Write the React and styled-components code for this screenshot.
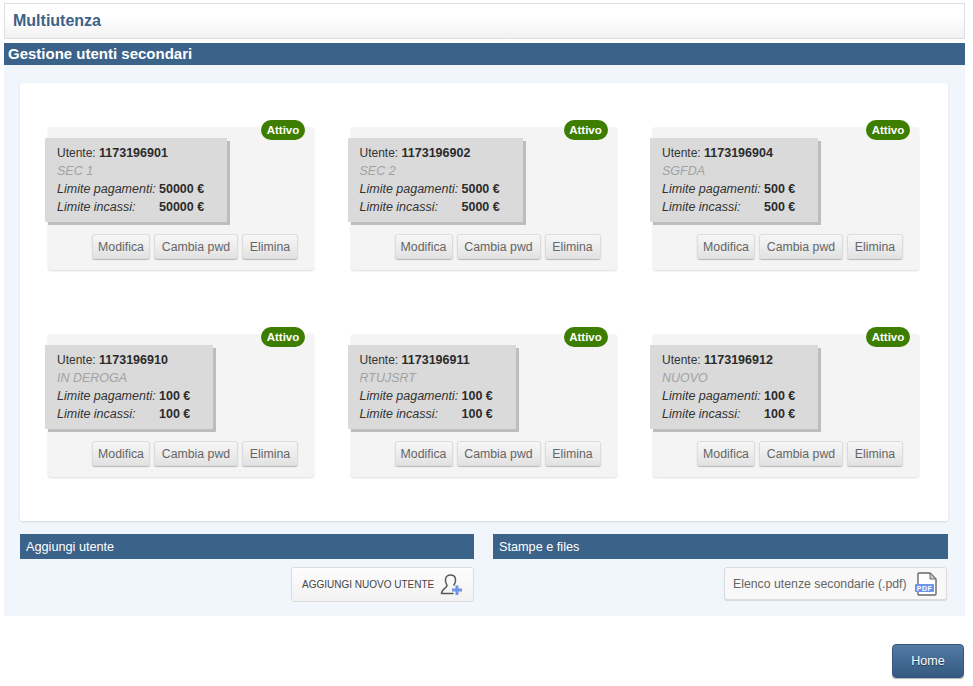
import React from 'react';
import styled, { createGlobalStyle } from 'styled-components';

const users = [
  { id: '1173196901', name: 'SEC 1', pay: '50000 €', inc: '50000 €' },
  { id: '1173196902', name: 'SEC 2', pay: '5000 €', inc: '5000 €' },
  { id: '1173196904', name: 'SGFDA', pay: '500 €', inc: '500 €' },
  { id: '1173196910', name: 'IN DEROGA', pay: '100 €', inc: '100 €' },
  { id: '1173196911', name: 'RTUJSRT', pay: '100 €', inc: '100 €' },
  { id: '1173196912', name: 'NUOVO', pay: '100 €', inc: '100 €' },
];

function AddUserIcon() {
  return (
    <svg width="24" height="22" viewBox="0 0 24 22">
      <path
        d="M7 11.5 C4.5 8 4.5 1 10.5 1 C16.5 1 16.5 7 14 11 M7 11.5 C7 14 1.5 14.5 1.5 19.5 H13"
        fill="none"
        stroke="#5a5a5a"
        strokeWidth="1.5"
        strokeLinecap="round"
      />
      <path d="M15.5 11.5 h3 v3 h3.5 v3 h-3.5 v3.5 h-3 v-3.5 h-3.5 v-3 h3.5 z" fill="#6f94e8" />
    </svg>
  );
}

function PdfIcon() {
  return (
    <svg width="22" height="24" viewBox="0 0 22 24">
      <path
        d="M3 12 V2 a1 1 0 0 1 1 -1 H15 L21 7 V22 a1 1 0 0 1 -1 1 H4 a1 1 0 0 1 -1 -1 V20"
        fill="#fff"
        stroke="#6a6a6a"
        strokeWidth="1.4"
      />
      <path d="M15 1 V7 H21 Z" fill="#c4c4c4" stroke="#6a6a6a" strokeWidth="1" />
      <rect x="0" y="12" width="19" height="8" rx="1" fill="#6f94e8" />
      <text x="9.5" y="18.7" fontFamily="Liberation Sans, sans-serif" fontSize="7" fontWeight="700" letterSpacing="0.5" fill="#fff" textAnchor="middle">
        PDF
      </text>
    </svg>
  );
}

function UserCard({ user }) {
  return (
    <Card>
      <StatusBadge>Attivo</StatusBadge>
      <InfoBox>
        <InfoLine>
          Utente: <strong>{user.id}</strong>
        </InfoLine>
        <UserName>{user.name}</UserName>
        <LimitRow>
          <LimitLabel>Limite pagamenti:</LimitLabel>
          <strong>{user.pay}</strong>
        </LimitRow>
        <LimitRow>
          <LimitLabel>Limite incassi:</LimitLabel>
          <strong>{user.inc}</strong>
        </LimitRow>
      </InfoBox>
      <CardActions>
        <SmallButton $width={58}>Modifica</SmallButton>
        <SmallButton $width={84}>Cambia pwd</SmallButton>
        <SmallButton $width={56}>Elimina</SmallButton>
      </CardActions>
    </Card>
  );
}

export default function App() {
  return (
    <Page>
      <GlobalStyle />
      <TitleBar>Multiutenza</TitleBar>
      <SectionBar>Gestione utenti secondari</SectionBar>
      <Panel>
        <WhiteCard>
          {users.map((u) => (
            <UserCard key={u.id} user={u} />
          ))}
        </WhiteCard>
        <BottomGrid>
          <div>
            <SubHeader>Aggiungi utente</SubHeader>
            <ActionRow>
              <AddButton>
                AGGIUNGI NUOVO UTENTE
                <AddUserIcon />
              </AddButton>
            </ActionRow>
          </div>
          <div>
            <SubHeader>Stampe e files</SubHeader>
            <ActionRow>
              <PdfButton>
                Elenco utenze secondarie (.pdf)
                <PdfIcon />
              </PdfButton>
            </ActionRow>
          </div>
        </BottomGrid>
      </Panel>
      <Footer>
        <HomeButton>Home</HomeButton>
      </Footer>
    </Page>
  );
}

const GlobalStyle = createGlobalStyle`
  html, body {
    margin: 0;
    padding: 0;
    background: #fff;
    font-family: "Liberation Sans", Arial, sans-serif;
  }
  * {
    box-sizing: border-box;
  }
`;

const Page = styled.div`
  width: 973px;
  height: 686px;
  padding: 3px 8px 0 4px;
  overflow: hidden;
`;

const TitleBar = styled.div`
  height: 36px;
  border: 1px solid #dedede;
  background: linear-gradient(#fff 0%, #fff 40%, #f1f1f1 100%);
  color: #3c6289;
  font-size: 16px;
  font-weight: 700;
  line-height: 33px;
  padding-left: 8px;
`;

const SectionBar = styled.div`
  height: 22px;
  margin-top: 4px;
  background: #3b6288;
  color: #fff;
  font-size: 15px;
  font-weight: 700;
  line-height: 22px;
  padding-left: 4px;
`;

const Panel = styled.div`
  height: 551px;
  background: #f0f6fc;
  padding: 18px 17px 0 16px;
`;

const WhiteCard = styled.div`
  height: 438px;
  background: #fff;
  border-radius: 3px;
  box-shadow: 0 1px 2px rgba(0, 0, 0, 0.12);
  padding: 44px 29px 0 28px;
  display: grid;
  grid-template-columns: repeat(3, 266px);
  grid-auto-rows: 143px;
  column-gap: 36.5px;
  row-gap: 64px;
`;

const Card = styled.div`
  position: relative;
  background: #f4f4f4;
  border-radius: 3px;
  box-shadow: 0 1px 2px rgba(0, 0, 0, 0.14);
  padding-top: 11px;
`;

const StatusBadge = styled.span`
  position: absolute;
  top: -7px;
  right: 9px;
  width: 44px;
  height: 20px;
  border-radius: 10px;
  background: #3d7d00;
  color: #fff;
  font-size: 11.5px;
  font-weight: 700;
  line-height: 20px;
  text-align: center;
`;

const InfoBox = styled.div`
  width: fit-content;
  height: 84px;
  margin-left: -3px;
  padding: 6px 23px 0 12px;
  background: #dadada;
  box-shadow: 3px 3px 0 #bdbdbd;
  color: #333;
  font-size: 12.5px;
  line-height: 18px;

  strong {
    font-weight: 700;
    color: #2b2b2b;
  }
`;

const InfoLine = styled.div`
  white-space: nowrap;
  font-size: 12px;

  strong {
    font-size: 12.5px;
  }
`;

const UserName = styled.div`
  color: #a2a2a2;
  font-style: italic;
`;

const LimitRow = styled.div`
  display: flex;
  white-space: nowrap;
`;

const LimitLabel = styled.span`
  width: 102px;
  font-style: italic;
`;

const CardActions = styled.div`
  display: flex;
  justify-content: flex-end;
  gap: 4px;
  margin-top: 12px;
  padding-right: 16px;
`;

const SmallButton = styled.button`
  width: ${(p) => p.$width}px;
  height: 25px;
  padding: 0;
  border: 1px solid #dcdcdc;
  border-radius: 3px;
  background: linear-gradient(#f7f7f7, #e2e2e2);
  box-shadow: 0 1px 1px rgba(0, 0, 0, 0.25);
  color: #666;
  font-family: inherit;
  font-size: 12.3px;
`;

const BottomGrid = styled.div`
  display: grid;
  grid-template-columns: 454px 455px;
  column-gap: 19px;
  margin-top: 13px;
`;

const SubHeader = styled.div`
  height: 25px;
  background: #3b6288;
  color: #fff;
  font-size: 12.7px;
  line-height: 26px;
  padding-left: 6px;
`;

const ActionRow = styled.div`
  display: flex;
  justify-content: flex-end;
  margin-top: 8px;
`;

const AddButton = styled.button`
  display: flex;
  align-items: center;
  justify-content: space-between;
  width: 183px;
  height: 35px;
  padding: 0 9px 0 10px;
  border: 1px solid #dcdcdc;
  border-radius: 3px;
  background: linear-gradient(#fdfdfd, #f2f2f2);
  color: #444;
  font-family: inherit;
  font-size: 10px;
`;

const PdfButton = styled.button`
  display: flex;
  align-items: center;
  justify-content: space-between;
  width: 223px;
  height: 33px;
  margin-right: 1px;
  padding: 0 9px 0 8px;
  border: 1px solid #dcdcdc;
  border-radius: 3px;
  background: #f8f8f8;
  box-shadow: 0 1px 1px rgba(0, 0, 0, 0.12);
  color: #666;
  font-family: inherit;
  font-size: 12.3px;
`;

const Footer = styled.div`
  display: flex;
  justify-content: flex-end;
  padding: 28px 1px 0 0;
`;

const HomeButton = styled.button`
  width: 72px;
  height: 34px;
  border: 1px solid #36587c;
  border-radius: 4px;
  background: linear-gradient(#527aa3, #355a82);
  box-shadow: 0 1px 1px rgba(0, 0, 0, 0.3);
  color: #fff;
  font-family: inherit;
  font-size: 12.5px;
  text-shadow: 0 1px 1px rgba(0, 0, 0, 0.5);
`;
